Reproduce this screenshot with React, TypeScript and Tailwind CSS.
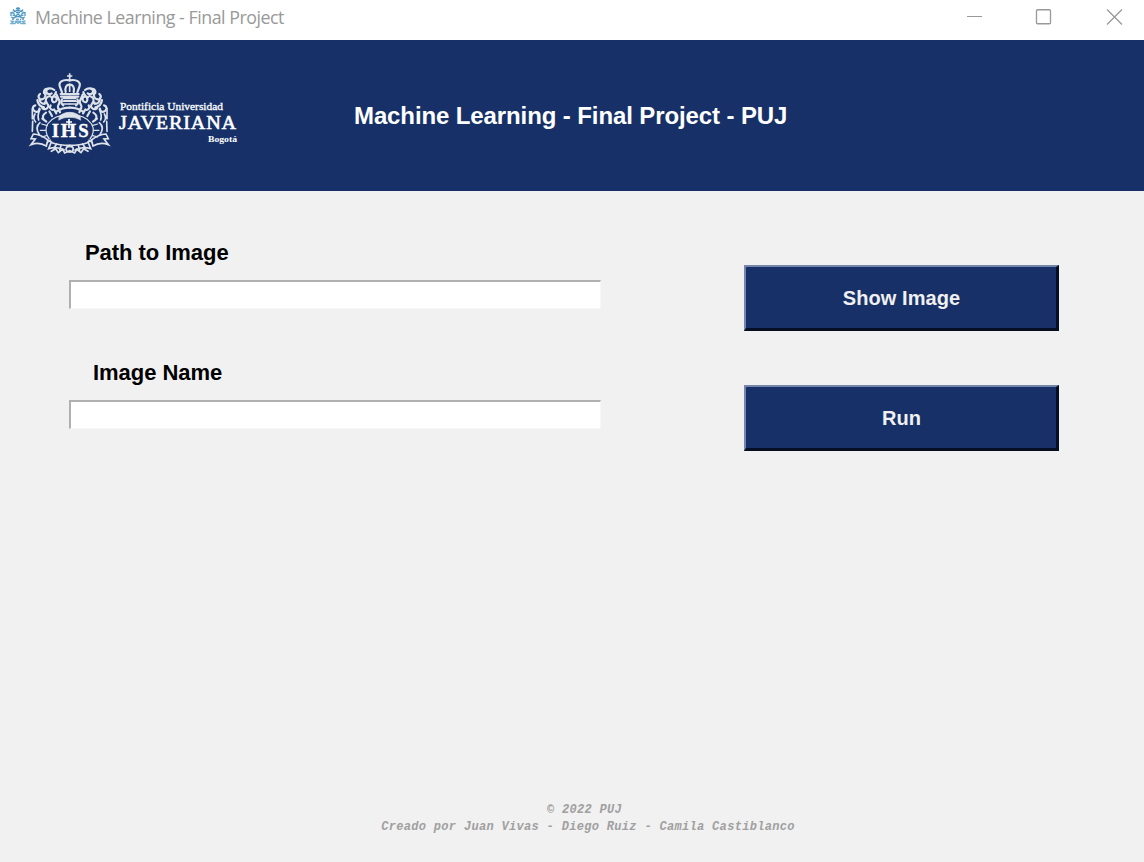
import React from "react";

function CrestHalf() {
  return (
    <g fill="none" stroke="#fff" strokeWidth="6.5" strokeLinecap="round">
      <path d="M149 49c-22-4-35 6-29 20l6 16M149 62c-10 0-15 8-12 22M122 90h27M123 98h26M126 106c-4 8-2 14 4 18" />
      <path d="M125 112h24M130 120h19" strokeWidth="4" />
      <path d="M103 78c-10-8-22-6-24 2s8 14 16 8M84 75c-8-2-14 4-12 12M60 90c-8 6-4 18 6 16s14-14 6-20M58 102c0 10 6 18 16 18" />
      <path d="M108 84c-2 12-14 14-12 24s12 8 14 0-8-14-16-8M90 96c-12 2-16 12-10 20M110 92l8 18c4 10-8 14-4 22" />
      <path d="M52 108c2 14 8 20 20 22M46 124c-8 2-10 10-4 16s16 4 16-6M74 116c10 0 14 10 8 16s-16 4-16-4M92 124c-4 6-2 12 6 14" />
      <path d="M37 134v30M45 150c-6 10-4 18 2 24M60 136c-6 12-8 20-4 32M38 172l-1 30M60 176c-12 10-10 24-2 36" strokeWidth="5" />
      <path d="M78 146c-10 6-12 14-6 22M88 142l8 14M102 136l7 12M116 133l4 12M67 164l12 9M110 142c12-8 26-11 39-11" />
      <path d="M83 180c12-18 36-28 66-28M83 180c-8 14-6 32 5 45M82 185l-17-5M78 199H61M82 214l-17 5M92 228l-12 9" strokeWidth="3.5" />
      <path d="M118 157c7-7 17-12 31-12v15c-13 0-22 2-32 8z" fill="#fff" strokeWidth="2" />
      <path d="M40 210l-7 14 13 1-13 17c18-7 30-6 46 4l5-18c-14-11-30-17-44-18zM82 229l12 5-8 20c18-6 32-4 47 4M96 236c16 6 34 8 53 8" strokeWidth="5" />
      <path d="M110 240l-8 12M123 245l-4 13M94 262l13-8 8 12 13-10 6 11 15-7M149 247c-14 0-15 15 0 17" strokeWidth="5" />
    </g>
  );
}

function Crest() {
  return (
    <svg viewBox="0 0 330 300" className="h-[100px] w-[110px] shrink-0" aria-label="IHS">
      <g opacity=".86">
        <CrestHalf />
        <g transform="matrix(-1 0 0 1 298 0)"><CrestHalf /></g>
        <path d="M149 28v20M141 36h16M149 60v24" stroke="#fff" strokeWidth="5" />
        <path d="M129 102h40M130 110h38" stroke="#fff" strokeWidth="6" />
      </g>
      <path d="M147 165v28M138 174h18" stroke="#fff" strokeWidth="5" />
      <g fill="#fff" stroke="#fff" strokeWidth="1" fontFamily="Liberation Serif, serif" fontWeight="700" fontSize="56">
        <text x="95" y="220">I</text>
        <text x="122" y="220" textLength="46" lengthAdjust="spacingAndGlyphs">H</text>
        <text x="175" y="220">S</text>
      </g>
    </svg>
  );
}

function LogoText() {
  return (
    <svg viewBox="0 0 130 64" className="h-16 w-[130px] shrink-0" fill="#fff" fontFamily="Liberation Serif, serif">
      <text x="2" y="20" fontSize="11" stroke="#fff" strokeWidth=".3" textLength="103" lengthAdjust="spacingAndGlyphs">Pontificia Universidad</text>
      <text x="1" y="38.500" fontSize="19.500" stroke="#fff" strokeWidth=".6" letterSpacing=".8" textLength="118" lengthAdjust="spacingAndGlyphs">JAVERIANA</text>
      <text x="90" y="51.500" fontSize="9" fontWeight="700" textLength="29" lengthAdjust="spacingAndGlyphs">Bogotá</text>
    </svg>
  );
}

function AppIcon() {
  return (
    <svg viewBox="0 0 16 18" className="h-[18px] w-4" fill="none" stroke="#4b96c3" strokeWidth="1.3">
      <path d="M8 0v3M6 1.500h4" />
      <path d="M5.500 3.500h5M6 5.500h4M3 2.500l2 2-3 1 3 2M13 2.500l-2 2 3 1-3 2M1 5v4M15 5v4M2.500 8l3 1 2.500-2 2.500 2 3-1M1 10l3 1M15 10l-3 1M4 11c2-2 6-2 8 0" />
      <path d="M2 12h2M6 12.500h1M8 11.500v2M10 12.500h1M12 12h2" strokeWidth="1.5" />
      <path d="M.5 14l3 .5-2.500 2h4l1-1.500 2 1.500 2-1.500 1 1.500h4l-2.500-2 3-.5M5 14.500h6" stroke="#72aed0" />
    </svg>
  );
}

function TitleBar() {
  return (
    <header className="flex h-10 items-start bg-white text-[#999]">
      <div className="ml-2.5 mt-[7px]"><AppIcon /></div>
      <span className="ml-[9px] mt-1 w-[260px] whitespace-nowrap font-['Open_Sans',sans-serif] text-[17.8px] leading-[26px] tracking-[-0.48px]">Machine Learning - Final Project</span>
      <svg viewBox="0 0 164 24" className="ml-auto mr-[16px] mt-[5px] h-6 w-[164px]" fill="none" stroke="#999">
        <path d="M3 11.500h15" />
        <rect x="72.500" y="4.750" width="14" height="14" rx="1" strokeWidth="1.3" />
        <path d="M143 4.500l15 15M158 4.500l-15 15" strokeWidth="1.3" />
      </svg>
    </header>
  );
}

function Field({ label, indent }: { label: string; indent: string }) {
  return (
    <label className="block h-[120px]">
      <span className={`block h-10 whitespace-nowrap text-[22px] font-bold leading-[26px] tracking-[-0.05px] text-black ${indent}`}>{label}</span>
      <input className="block h-[29px] w-[532px] border-b border-l-2 border-r border-t-2 border-b-[#f7f7f7] border-l-[#b0b0b0] border-r-[#f7f7f7] border-t-[#b0b0b0] bg-white px-1 outline-none" />
    </label>
  );
}

function ActionButton({ children }: { children: React.ReactNode }) {
  return (
    <button className="h-[66px] w-[315px] border-b-[3px] border-l-2 border-r-[3px] border-t-2 border-b-[#060f22] border-l-[#7587a9] border-r-[#060f22] border-t-[#7587a9] bg-[#173168] pt-px pl-px text-[20px] font-bold tracking-[0.08px] text-[#f0f0f0]">
      {children}
    </button>
  );
}

export default function App() {
  return (
    <div className="flex h-[862px] w-[1144px] flex-col overflow-hidden bg-[#f1f1f1] font-['Liberation_Sans',sans-serif]">
      <TitleBar />
      <section className="flex h-[151px] items-start bg-[#173168]">
        <div className="ml-5 mt-6"><Crest /></div>
        <div className="-ml-3 mt-[50px]"><LogoText /></div>
        <h1 className="ml-[106px] mt-[61px] whitespace-nowrap text-[24px] font-bold leading-[30px] tracking-[-0.11px] text-white">Machine Learning - Final Project - PUJ</h1>
      </section>
      <main className="flex flex-1 items-start pl-[69px]">
        <div className="mt-[49px]">
          <Field label="Path to Image" indent="pl-4" />
          <Field label="Image Name" indent="pl-6" />
        </div>
        <div className="ml-[143px] mt-[74px] flex flex-col gap-[54px]">
          <ActionButton>Show Image</ActionButton>
          <ActionButton>Run</ActionButton>
        </div>
      </main>
      <footer className="mb-[27px] text-center font-['Liberation_Mono',monospace] text-[12px] font-bold italic leading-[16.5px] tracking-[0.32px] text-[#a0a0a0]">
        <p className="pl-[25px]">© 2022 PUJ</p>
        <p className="pl-8">Creado por Juan Vivas - Diego Ruiz - Camila Castiblanco</p>
      </footer>
    </div>
  );
}
